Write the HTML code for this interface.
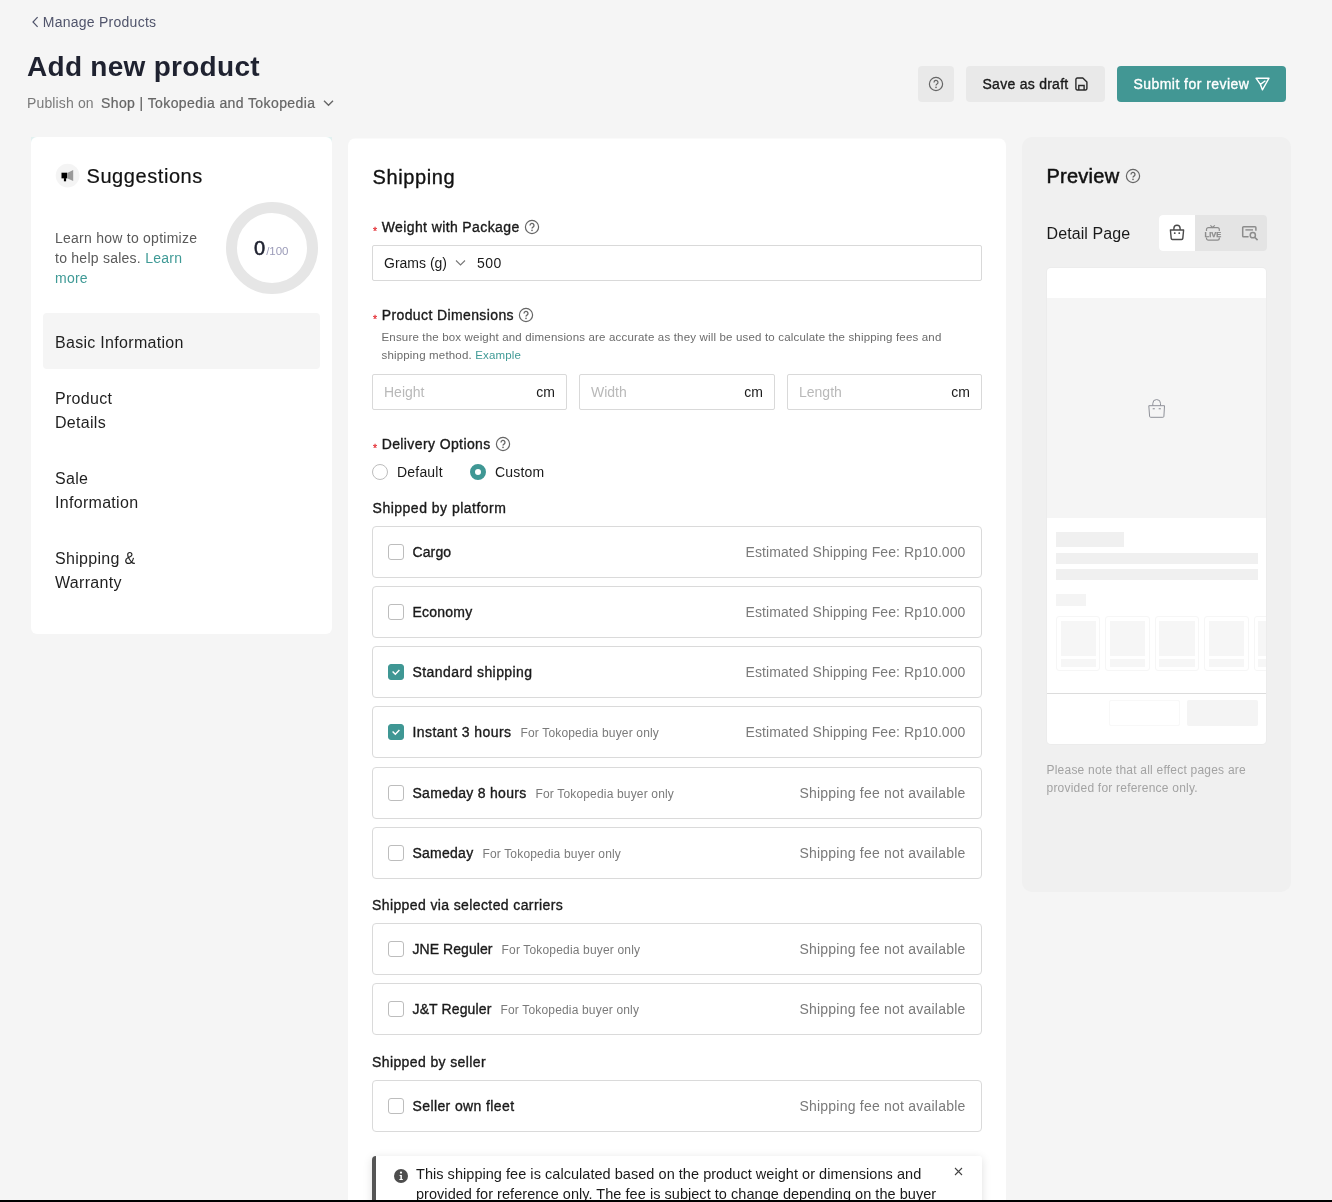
<!DOCTYPE html>
<html lang="en">
<head>
<meta charset="utf-8">
<title>Add new product</title>
<style>
*{box-sizing:border-box;margin:0;padding:0}
html,body{width:1332px;height:1202px;overflow:hidden;background:#f5f5f5}
body{position:relative;font-family:"Liberation Sans",sans-serif;color:#1a1a1a;font-size:14px}
.abs{position:absolute;white-space:nowrap}
a{color:#3f9a96;text-decoration:none}
svg{display:block}
.sb{-webkit-text-stroke:.35px currentColor}
/* header */
.back{left:32px;top:13px;height:18px;line-height:18px;font-size:14px;letter-spacing:.25px;color:#50546b;display:flex;align-items:center}
.title{left:27px;top:48.5px;font-size:28px;line-height:36px;font-weight:700;color:#1f2230;letter-spacing:.28px}
.pub{left:27px;top:93px;font-size:14px;line-height:20px;color:#7a7a7a;letter-spacing:.14px}
.pubsel{left:101px;top:93px;font-size:14px;line-height:20px;color:#666;letter-spacing:.4px}
.btn{top:66px;height:36px;border-radius:4px;background:#e9e9e9;display:flex;align-items:center;font-size:14px;color:#1a1a1a}
.btn.primary{background:#429794;color:#fff}
/* cards */
.card{position:absolute;background:#fff;border-radius:8px}
.side{left:31px;top:137px;width:301px;height:497px;border-radius:6px}
.main{left:348px;top:138px;width:658px;height:1070px;border-radius:8px 8px 0 0}
.prev{left:1022px;top:137px;width:269px;height:755px;background:#f0f0f0;border-radius:10px}
.blackbar{position:absolute;left:0;top:1200px;width:1332px;height:2px;background:#000}
/* sidebar */
.sugico{left:24px;top:26px;width:26px;height:26px}
.sugt{left:55.5px;top:24.8px;font-size:20px;line-height:28px;color:#111;letter-spacing:.57px;-webkit-text-stroke:.2px #111}
.learn{left:24px;top:91px;font-size:14px;line-height:20px;color:#5a5a5a;letter-spacing:.25px}
.ring{left:195px;top:65px;width:92px;height:92px;border-radius:50%;border:11px solid #e6e6e6}
.score{left:223px;top:98.5px;font-size:20px;line-height:24px;color:#1f2230;-webkit-text-stroke:.55px #1f2230}
.score span{font-size:11.5px;color:#9b9bb8;margin-left:1px;-webkit-text-stroke:0}
.mi{position:absolute;left:12px;width:277px;padding:18px 12px 14px;font-size:16px;line-height:24px;color:#1f1f1f;border-radius:4px;letter-spacing:.3px}
.mi.on{background:#f5f5f5}
/* main */
.h2{left:24.5px;top:25px;font-size:20px;line-height:28px;color:#111;letter-spacing:.62px}
.lbl{left:24px;font-size:14px;line-height:20px;color:#1a1a1a;display:flex;align-items:center;letter-spacing:.39px}
.lbl i{font-style:normal;color:#e5353b;font-size:10.5px;width:9.7px;display:inline-block;position:relative;top:3.6px;left:1.1px;letter-spacing:0;-webkit-text-stroke:.3px #e5353b}
.lbl svg{margin-left:4.5px}
.inp{position:absolute;height:36px;border:1px solid #d9d9d9;border-radius:2px;background:#fff;font-size:14px;line-height:34px}
.hint{left:33.5px;top:190px;font-size:11.5px;line-height:18px;color:#6b6b6b;letter-spacing:.17px}
.ph{color:#b9b9b9}
.sec{left:24px;font-size:14px;line-height:20px;color:#1a1a1a;letter-spacing:.39px}
.row{position:absolute;left:24px;width:610px;height:52px;border:1px solid #dadada;border-radius:4px;background:#fff}
.cb{position:absolute;left:15px;top:17px;width:16px;height:16px;border:1px solid #bdbdbd;border-radius:3px;background:#fff}
.cb.on{background:#3f9794;border-color:#3f9794}
.rl{position:absolute;left:39.5px;top:15px;font-size:14px;line-height:20px;color:#1a1a1a;white-space:nowrap;letter-spacing:.38px}
.rl small{font-size:12px;color:#7a7a7a;margin-left:9px;-webkit-text-stroke:0;font-weight:400;letter-spacing:.17px}
.rr{position:absolute;right:15.5px;top:15px;font-size:14px;line-height:20px;color:#7a7a7a;white-space:nowrap;letter-spacing:.09px}
.rr.na{letter-spacing:.22px}
.radio{position:absolute;width:16px;height:16px;border-radius:50%;border:1px solid #bdbdbd;background:#fff}
.radio.on{border:5px solid #3f9794}

.rt{font-size:14px;line-height:20px;color:#1a1a1a;letter-spacing:.2px}
.info{position:absolute;left:24px;top:1018px;width:610px;height:80px;background:#fff;border-left:4px solid #555;border-radius:4px 3px 0 0;box-shadow:0 2px 10px rgba(0,0,0,.13)}
.itx{left:40px;top:8px;font-size:14.5px;line-height:20px;color:#1a1a1a;letter-spacing:.04px}

.pvt{left:24.5px;top:24.5px;font-size:20px;line-height:28px;color:#111;letter-spacing:.25px;-webkit-text-stroke:.5px #111}
.dpt{left:24.5px;top:85px;letter-spacing:.1px;font-size:16px;line-height:24px;color:#1a1a1a}
.tabs{left:137px;top:78px;width:108px;height:36px;background:#e4e4e4;border-radius:4px}
.tabon{left:0;top:0;width:36px;height:36px;background:#fff;border-radius:4px 0 0 4px}
.phone{left:25px;top:131px;width:219px;height:476px;background:#fff;border-radius:4px;overflow:hidden;box-shadow:0 0 0 1px #ececec}
.sk{background:#f0f0f0}
.pc{top:348px;width:44.4px;height:55px;border:1px solid #f6f6f6;border-radius:3px;background:#fff}
.pc b{position:absolute;left:3.5px;top:4px;width:35.5px;height:35px;background:#f6f6f6}
.pc u{position:absolute;left:3.5px;top:41.5px;width:35.5px;height:8px;background:#f6f6f6}
.note{left:24.5px;top:624px;font-size:12px;line-height:18px;color:#a3a3a3;letter-spacing:.22px}
.main::before{content:"";position:absolute;left:0;top:0;right:0;height:1px;background:rgba(245,245,245,.5)}
</style>
</head>
<body>
<div id="root" style="position:absolute;left:0;top:0;width:1332px;height:1202px;will-change:transform">

<svg width="0" height="0" style="position:absolute"><defs>
<g id="qm"><circle cx="8" cy="8" r="6.6" fill="none" stroke="#666" stroke-width="1.2"/><path d="M6 6.4 a2 2 0 1 1 3 1.7 c-.7.4-1 .8-1 1.5" fill="none" stroke="#666" stroke-width="1.35"/><circle cx="8" cy="11.4" r=".8" fill="#666"/></g>
<g id="ck"><path d="M3.6 6.6 L6.3 9.2 L10.4 4.9" fill="none" stroke="#fff" stroke-width="1.4"/></g>
</defs></svg>
<!-- HEADER -->
<div class="abs back"><svg width="7" height="12" viewBox="0 0 7 12" style="margin-right:3.8px"><path d="M5.6 1.2 L1 6 L5.6 10.8" fill="none" stroke="#50546b" stroke-width="1.2"/></svg>Manage Products</div>
<div class="abs title">Add new product</div>
<div class="abs pub">Publish on</div>
<div class="abs pubsel" style="-webkit-text-stroke:.22px #666">Shop | Tokopedia and Tokopedia</div>
<svg class="abs" style="left:323px;top:98px" width="11" height="10" viewBox="0 0 11 10"><path d="M1 2.8 L5.5 7.2 L10 2.8" fill="none" stroke="#666" stroke-width="1.4"/></svg>

<div class="abs btn" style="left:918px;width:36px;justify-content:center">
<svg width="16" height="16" viewBox="0 0 16 16"><circle cx="8" cy="8" r="6.6" fill="none" stroke="#666" stroke-width="1.2"/><path d="M6 6.4 a2 2 0 1 1 3 1.7 c-.7.4-1 .8-1 1.5" fill="none" stroke="#666" stroke-width="1.2"/><circle cx="8" cy="11.4" r=".8" fill="#666"/></svg>
</div>
<div class="abs btn sb" style="left:966px;width:139px;padding-left:16.5px;letter-spacing:.27px">Save as draft
<svg style="margin-left:6.6px;margin-top:0" width="13" height="14" viewBox="0 0 13 14"><path d="M.9 2.4 a1.4 1.4 0 0 1 1.4-1.4 h5.5 l4.1 4.1 v6.5 a1.4 1.4 0 0 1-1.4 1.4 h-8.2 a1.4 1.4 0 0 1-1.4-1.4z" fill="none" stroke="#2a2a2a" stroke-width="1.4" stroke-linejoin="round"/><path d="M3.8 13 v-4.5 h5.3 v4.5" fill="none" stroke="#2a2a2a" stroke-width="1.4"/></svg>
</div>
<div class="abs btn primary sb" style="left:1117px;width:169px;padding-left:16.5px;letter-spacing:.45px">Submit for review
<svg style="margin-left:6px;margin-top:.5px" width="15" height="14" viewBox="0 0 15 14"><path d="M1 1.2 h13 l-6.6 11.6 l-2-5.4z M5.4 7.4 l5-3.6" fill="none" stroke="#fff" stroke-width="1.4" stroke-linejoin="round"/></svg>
</div>

<!-- SIDEBAR -->
<div class="abs" style="left:31px;top:137px;width:301px;height:8px;background:#e2f1f0"></div>
<div class="card side" id="side">
  <div class="abs sugico"><svg width="26" height="26" viewBox="-0.6 -0.6 26 26"><circle cx="12" cy="12" r="11.9" fill="#f4f4f4"/><path d="M5.9 9.1 h5.7 v5.65 h-5.7z" fill="#000"/><rect x="8.3" y="14.5" width="2.2" height="3.2" fill="#000"/><path d="M11.6 9.3 L17.6 6.4 v11 L11.6 14.6z" fill="#9a9a9a"/></svg></div>
  <div class="abs sugt">Suggestions</div>
  <div class="abs learn">Learn how to optimize<br>to help sales. <a>Learn<br>more</a></div>
  <div class="abs ring"></div>
  <div class="abs score">0<span>/100</span></div>
  <div class="mi on" style="top:176px">Basic Information</div>
  <div class="mi" style="top:232px">Product<br>Details</div>
  <div class="mi" style="top:312px">Sale<br>Information</div>
  <div class="mi" style="top:392px">Shipping &amp;<br>Warranty</div>
</div>

<!-- MAIN -->
<div class="card main" id="main">
  <div class="abs h2 sb">Shipping</div>

  <div class="abs lbl sb" style="top:79px"><i>*</i>Weight with Package<svg class="q" width="16" height="16" viewBox="0 0 16 16"><use href="#qm"/></svg></div>
  <div class="inp" style="left:24px;top:107px;width:610px">
    <span class="abs" style="left:11px;top:0;letter-spacing:0">Grams (g)</span>
    <svg class="abs" style="left:82px;top:13px" width="11" height="8" viewBox="0 0 11 8"><path d="M1 1.5 L5.5 6 L10 1.5" fill="none" stroke="#777" stroke-width="1.1"/></svg>
    <span class="abs" style="left:104px;top:0;letter-spacing:.5px">500</span>
  </div>

  <div class="abs lbl sb" style="top:167px"><i>*</i>Product Dimensions<svg class="q" width="16" height="16" viewBox="0 0 16 16"><use href="#qm"/></svg></div>
  <div class="abs hint">Ensure the box weight and dimensions are accurate as they will be used to calculate the shipping fees and<br>shipping method. <a>Example</a></div>
  <div class="inp" style="left:24px;top:236px;width:195px"><span class="abs ph" style="left:11px;top:0">Height</span><span class="abs" style="right:11px;top:0">cm</span></div>
  <div class="inp" style="left:231px;top:236px;width:196px"><span class="abs ph" style="left:11px;top:0">Width</span><span class="abs" style="right:11px;top:0">cm</span></div>
  <div class="inp" style="left:439px;top:236px;width:195px"><span class="abs ph" style="left:11px;top:0">Length</span><span class="abs" style="right:11px;top:0">cm</span></div>

  <div class="abs lbl sb" style="top:296px"><i>*</i>Delivery Options<svg class="q" width="16" height="16" viewBox="0 0 16 16"><use href="#qm"/></svg></div>
  <div class="radio" style="left:24px;top:326px"></div>
  <div class="abs rt" style="left:49px;top:324px">Default</div>
  <div class="radio on" style="left:122px;top:326px"></div>
  <div class="abs rt" style="left:147px;top:324px">Custom</div>

  <div class="abs sec sb" style="top:359.7px;left:24.6px;letter-spacing:.49px">Shipped by platform</div>
  <div class="row" style="top:388px"><div class="cb"></div><div class="rl sb" style="letter-spacing:0.11px">Cargo</div><div class="rr">Estimated Shipping Fee: Rp10.000</div></div>
  <div class="row" style="top:448px"><div class="cb"></div><div class="rl sb" style="letter-spacing:0.22px">Economy</div><div class="rr">Estimated Shipping Fee: Rp10.000</div></div>
  <div class="row" style="top:508px"><div class="cb on"><svg width="14" height="14" viewBox="0 0 14 14"><use href="#ck"/></svg></div><div class="rl sb" style="letter-spacing:0.42px">Standard shipping</div><div class="rr">Estimated Shipping Fee: Rp10.000</div></div>
  <div class="row" style="top:568px"><div class="cb on"><svg width="14" height="14" viewBox="0 0 14 14"><use href="#ck"/></svg></div><div class="rl sb" style="letter-spacing:0.42px">Instant 3 hours<small>For Tokopedia buyer only</small></div><div class="rr">Estimated Shipping Fee: Rp10.000</div></div>
  <div class="row" style="top:629px"><div class="cb"></div><div class="rl sb" style="letter-spacing:0.28px">Sameday 8 hours<small>For Tokopedia buyer only</small></div><div class="rr na">Shipping fee not available</div></div>
  <div class="row" style="top:689px"><div class="cb"></div><div class="rl sb" style="letter-spacing:0.25px">Sameday<small>For Tokopedia buyer only</small></div><div class="rr na">Shipping fee not available</div></div>

  <div class="abs sec sb" style="top:757.1px">Shipped via selected carriers</div>
  <div class="row" style="top:785px"><div class="cb"></div><div class="rl sb" style="letter-spacing:0.06px">JNE Reguler<small>For Tokopedia buyer only</small></div><div class="rr na">Shipping fee not available</div></div>
  <div class="row" style="top:845px"><div class="cb"></div><div class="rl sb" style="letter-spacing:0.13px">J&amp;T Reguler<small>For Tokopedia buyer only</small></div><div class="rr na">Shipping fee not available</div></div>

  <div class="abs sec sb" style="top:913.8px">Shipped by seller</div>
  <div class="row" style="top:942px"><div class="cb"></div><div class="rl sb" style="letter-spacing:0.39px">Seller own fleet</div><div class="rr na">Shipping fee not available</div></div>

  <div class="info">
    <svg class="abs" style="left:17px;top:12px" width="16" height="16" viewBox="0 0 16 16"><circle cx="8" cy="8" r="7" fill="#4d4d4d"/><circle cx="8" cy="4.6" r="1.1" fill="#fff"/><path d="M6.6 6.9 h2.3 v4 h.9 v1.1 h-3.4 v-1.1 h1 v-2.9 h-.8z" fill="#fff"/></svg>
    <div class="abs itx">This shipping fee is calculated based on the product weight or dimensions and<br>provided for reference only. The fee is subject to change depending on the buyer</div>
    <svg class="abs" style="left:577.7px;top:11.3px" width="9" height="9" viewBox="0 0 9 9"><path d="M1 1 L8 8 M8 1 L1 8" stroke="#444" stroke-width="1.1" fill="none"/></svg>
  </div>
</div>

<!-- PREVIEW -->
<div class="card prev" id="prev">
  <div class="abs pvt">Preview</div>
  <svg class="abs" style="left:103px;top:31px" width="16" height="16" viewBox="0 0 16 16"><use href="#qm"/></svg>
  <div class="abs dpt">Detail Page</div>
  <div class="abs tabs">
    <div class="abs tabon"></div>
    <svg class="abs" style="left:9px;top:7px" width="18" height="20" viewBox="0 0 18 20"><path d="M2.4 8 h13.2 l-.8 8.4 a1.2 1.2 0 0 1-1.2 1.1 h-9.2 a1.2 1.2 0 0 1-1.2-1.1z" fill="none" stroke="#4a4a4a" stroke-width="1.4" stroke-linejoin="round"/><path d="M5.9 8 v-1.7 a3.1 3.1 0 0 1 6.2 0 v1.7" fill="none" stroke="#4a4a4a" stroke-width="1.4"/><rect x="5.9" y="10.3" width="1.7" height="1.7" rx=".4" fill="#4a4a4a"/><rect x="10.4" y="10.3" width="1.7" height="1.7" rx=".4" fill="#4a4a4a"/></svg>
    <svg class="abs" style="left:45px;top:9px" width="18" height="18" viewBox="0 0 18 18"><path d="M6.4 1.3 L8.6 3.5 L10.8 1.3" fill="none" stroke="#8c8c8c" stroke-width="1.1"/><path d="M2.5 6.9 v-1.4 a1.9 1.9 0 0 1 1.9-1.9 h9 a1.9 1.9 0 0 1 1.9 1.9 v1.4 M2.5 13.6 v.7 a1.9 1.9 0 0 0 1.9 1.9 h9 a1.9 1.9 0 0 0 1.9-1.9 v-.7" fill="none" stroke="#8c8c8c" stroke-width="1.2"/><text x="8.9" y="12.7" font-family="Liberation Sans, sans-serif" font-size="7.5" font-weight="700" fill="#8c8c8c" stroke="#8c8c8c" stroke-width=".25" text-anchor="middle">LIVE</text></svg>
    <svg class="abs" style="left:82px;top:9px" width="19" height="18" viewBox="0 0 19 18"><path d="M7.6 12.8 h-5 a.9.9 0 0 1-.9-.9 v-8.2 a.9.9 0 0 1 .9-.9 h11.4 a.9.9 0 0 1 .9.9 v3" fill="none" stroke="#8c8c8c" stroke-width="1.5"/><path d="M4.4 5.9 h7.6" stroke="#8c8c8c" stroke-width="1.4"/><circle cx="11.8" cy="11.2" r="2.6" fill="none" stroke="#8c8c8c" stroke-width="1.5"/><path d="M13.7 13.2 L16.6 16.1" stroke="#8c8c8c" stroke-width="1.6"/></svg>
  </div>
  <div class="abs phone">
    <div class="abs" style="left:0;top:30px;width:220px;height:220px;background:#f5f5f5"></div>
    <svg class="abs" style="left:100px;top:130px" width="20" height="22" viewBox="0 0 20 22"><path d="M1.8 7.7 H17.5 L16.9 18.3 a1 1 0 0 1-1 1 H3.6 a1 1 0 0 1-1-1z" fill="none" stroke="#8f9199" stroke-width="1" stroke-linejoin="round"/><path d="M5.8 7.7 v-2.3 a3.85 3.85 0 0 1 7.7 0 v2.3" fill="none" stroke="#8f9199" stroke-width="1"/><rect x="5.7" y="10.2" width="2.1" height="1.1" fill="#8f9199"/><rect x="11.7" y="10.2" width="2.1" height="1.1" fill="#8f9199"/></svg>
    <div class="abs sk" style="left:9px;top:264px;width:68px;height:15px"></div>
    <div class="abs sk" style="left:9px;top:285px;width:202px;height:11px"></div>
    <div class="abs sk" style="left:9px;top:301px;width:202px;height:11px"></div>
    <div class="abs sk" style="left:9px;top:326px;width:30px;height:12px;background:#f4f4f4"></div>
    <div class="abs pc" style="left:9px"><b></b><u></u></div>
    <div class="abs pc" style="left:58.4px"><b></b><u></u></div>
    <div class="abs pc" style="left:107.8px"><b></b><u></u></div>
    <div class="abs pc" style="left:157.2px"><b></b><u></u></div>
    <div class="abs pc" style="left:206.6px"><b></b><u></u></div>
    <div class="abs" style="left:0;top:425px;width:220px;height:1px;background:#dcdcdc"></div>
    <div class="abs" style="left:62px;top:432px;width:71px;height:26px;border:1px solid #f8f8f8;border-radius:2px"></div>
    <div class="abs" style="left:140px;top:432px;width:71px;height:26px;background:#f4f4f4;border-radius:2px"></div>
  </div>
  <div class="abs note">Please note that all effect pages are<br>provided for reference only.</div>
</div>

<div class="blackbar"></div>
</div>
</body>
</html>
